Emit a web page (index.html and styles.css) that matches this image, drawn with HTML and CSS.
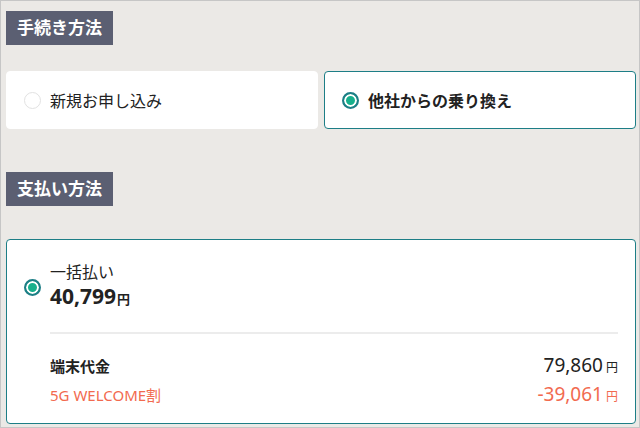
FILE: index.html
```html
<!DOCTYPE html>
<html lang="ja">
  <head>
    <meta charset="UTF-8" />
    <meta name="viewport" content="width=device-width, initial-scale=1.0" />
    <title>手続き方法</title>
    <link rel="stylesheet" href="styles.css">
  </head>
  <body>
    <div class="frame">
      <h2 class="label">手続き方法</h2>
      <div class="choices">
        <div class="choice">
          <span class="radio"></span>
          <span class="choice-text">新規お申し込み</span>
        </div>
        <div class="choice selected">
          <span class="radio checked"></span>
          <span class="choice-text">他社からの乗り換え</span>
        </div>
      </div>

      <h2 class="label second">支払い方法</h2>
      <div class="pay-card">
        <div class="pay-top">
          <span class="radio checked"></span>
          <div>
            <div class="pay-title">一括払い</div>
            <div class="pay-price">40,799<span class="yen">円</span></div>
          </div>
        </div>
        <div class="pay-detail">
          <div class="row">
            <span class="row-name">端末代金</span>
            <span class="row-value">79,860<span class="yen">円</span></span>
          </div>
          <div class="row discount">
            <span class="row-name">5G WELCOME割</span>
            <span class="row-value">-39,061<span class="yen">円</span></span>
          </div>
        </div>
      </div>
    </div>
  </body>
</html>
```

FILE: styles.css
```css
body {
  margin: 0;
  padding: 0;
  font-family: "Noto Sans", "Noto Sans CJK JP", sans-serif;
  color: #222;
}

.frame {
  box-sizing: border-box;
  height: 428px;
  overflow: hidden;
  background-color: #ebe9e6;
  border: 1px solid #c6c6c6;
  padding: 10px 3px 0 5px;
}

.label {
  display: inline-block;
  margin: 0;
  padding: 0 11px;
  height: 34px;
  line-height: 34px;
  background-color: #5b5f72;
  color: white;
  font-size: 17px;
  font-weight: bold;
}

.label.second {
  margin-top: 43px;
}

.choices {
  display: grid;
  grid-template-columns: 1fr 1fr;
  gap: 6px;
  margin-top: 26px;
}

.choice {
  display: flex;
  align-items: center;
  gap: 9px;
  height: 58px;
  box-sizing: border-box;
  padding-left: 17px;
  background-color: white;
  border: 1px solid white;
  border-radius: 4px;
  font-size: 16px;
}

.choice.selected {
  border-color: #1d7e86;
  font-weight: bold;
}

.radio {
  box-sizing: border-box;
  flex-shrink: 0;
  width: 17px;
  height: 17px;
  border-radius: 50%;
  border: 1.5px solid #e2e2e2;
  background-color: white;
}

.radio.checked {
  border: 2px solid #1d7e86;
  background-color: #17b08c;
  box-shadow: inset 0 0 0 2px white;
}

.pay-card {
  margin-top: 33px;
  background-color: white;
  border: 1px solid #1d7e86;
  border-radius: 4px;
  padding: 21px 17px 18px 17px;
}

.pay-top {
  display: flex;
  align-items: center;
  gap: 9px;
}

.pay-title {
  font-size: 16px;
  line-height: 22px;
}

.pay-price {
  font-size: 21px;
  font-weight: bold;
  line-height: 27px;
}

.pay-price .yen {
  font-size: 13px;
  margin-left: 1px;
}

.pay-detail {
  margin-left: 26px;
  margin-top: 19px;
  padding-top: 20px;
  border-top: 2px solid #ececec;
}

.row {
  display: flex;
  justify-content: space-between;
  align-items: center;
  height: 22px;
}

.row + .row {
  margin-top: 7px;
}

.row-name {
  font-size: 15px;
  font-weight: bold;
}

.row-value {
  font-size: 19px;
}

.row-value .yen {
  font-size: 12px;
  margin-left: 3px;
}

.discount {
  color: #f26a4f;
}

.discount .row-name {
  font-weight: normal;
}
```
